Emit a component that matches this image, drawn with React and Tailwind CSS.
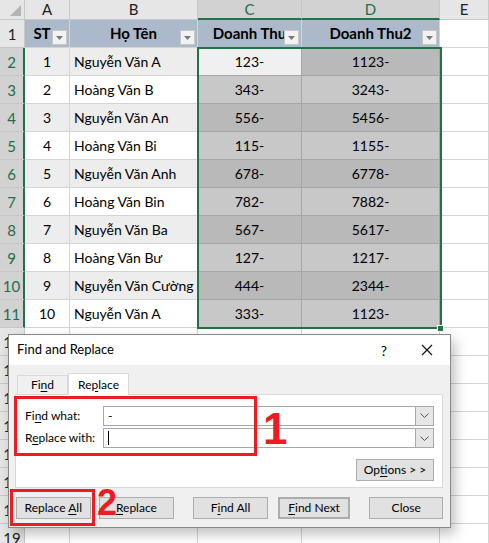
import React from "react";

const rows = [
  [1, "Nguyễn Văn A", "123-", "1123-"],
  [2, "Hoàng Văn B", "343-", "3243-"],
  [3, "Nguyễn Văn An", "556-", "5456-"],
  [4, "Hoàng Văn Bi", "115-", "1155-"],
  [5, "Nguyễn Văn Anh", "678-", "6778-"],
  [6, "Hoàng Văn Bin", "782-", "7882-"],
  [7, "Nguyễn Văn Ba", "567-", "5617-"],
  [8, "Hoàng Văn Bư", "127-", "1217-"],
  [9, "Nguyễn Văn Cường", "444-", "2344-"],
  [10, "Nguyễn Văn A", "333-", "1123-"],
];

const cell = "border-r border-b border-[#d4d4d4] flex items-center whitespace-nowrap overflow-hidden";

function FilterBtn() {
  return (
    <div className="absolute right-[2px] top-[10px] w-[15px] h-[15px] bg-[#f2f2f2] border border-[#c8c8c8] flex items-center justify-center">
      <svg width="7" height="4" viewBox="0 0 7 4">
        <path d="M0 0h7L3.5 4z" fill="#7a7a7a" />
      </svg>
    </div>
  );
}

function U({ children }) {
  return <span className="underline underline-offset-2">{children}</span>;
}

function Btn({ children, className = "" }) {
  return (
    <div
      className={
        "h-[22px] bg-[#e1e1e1] border border-[#adadad] flex items-center justify-center text-[12px] text-black whitespace-pre " +
        className
      }
    >
      <span>{children}</span>
    </div>
  );
}

function Sheet() {
  const colHead = "h-[20px] border-r border-b border-[#c8c8c8] flex items-center justify-center text-[15px]";
  return (
    <div
      className="grid grid-cols-[25px_45px_128px_104px_138px_49px] bg-white"
      style={{ fontFamily: "Lato, 'Liberation Sans', sans-serif" }}
    >
      {/* column header */}
      <div className={colHead + " bg-[#e6e6e6] relative"}>
        <svg className="absolute right-[3px] bottom-[3px]" width="11" height="11" viewBox="0 0 11 11">
          <path d="M11 0v11H0z" fill="#b4b4b4" />
        </svg>
      </div>
      <div className={colHead + " bg-[#e6e6e6] text-[#222]"}>A</div>
      <div className={colHead + " bg-[#e6e6e6] text-[#222]"}>B</div>
      <div className={colHead + " bg-[#d2d2d2] text-[#1f6e4a] border-b-2 border-b-[#217346]"}>C</div>
      <div className={colHead + " bg-[#d2d2d2] text-[#1f6e4a] border-b-2 border-b-[#217346]"}>D</div>
      <div className={colHead + " bg-[#e6e6e6] text-[#222]"}>E</div>

      {/* header row */}
      <div className="h-[28px] border-r border-b border-[#c8c8c8] bg-[#e6e6e6] flex items-end justify-center pb-[2px] text-[15px] text-[#222]">
        1
      </div>
      <div className={cell + " h-[28px] bg-[#acb9ca] font-bold text-[15px] justify-center pr-[10px] relative"}>
        ST
        <FilterBtn />
      </div>
      <div className={cell + " bg-[#acb9ca] font-bold text-[15px] justify-center relative"}>
        Họ Tên
        <FilterBtn />
      </div>
      <div className={cell + " bg-[#acb9ca] font-bold text-[15px] justify-center relative"}>
        Doanh Thu
        <FilterBtn />
      </div>
      <div className={cell + " bg-[#acb9ca] font-bold text-[15px] justify-center relative"}>
        Doanh Thu2
        <FilterBtn />
      </div>
      <div className={cell}></div>

      {rows.map((r, i) => {
        const band = i % 2 === 0;
        const ab = band ? "bg-[#ededed]" : "bg-white";
        const cd = band ? "bg-[#b9b9b9]" : "bg-[#c8c8c8]";
        const sel = "border-r border-b border-[#a6a6a6] flex items-center justify-center text-[14px]";
        return (
          <React.Fragment key={i}>
            <div className="h-[28px] border-b border-[#c8c8c8] border-r-2 border-r-[#217346] bg-[#d2d2d2] flex items-end justify-center pb-[2px] text-[15px] text-[#1f6e4a]">
              {i + 2}
            </div>
            <div className={cell + " " + ab + " justify-center text-[14px] border-[#c8c8c8]"}>{r[0]}</div>
            <div className={cell + " " + ab + " pl-[4px] text-[14px] border-[#c8c8c8]"}>{r[1]}</div>
            <div className={sel + " " + (i === 0 ? "bg-[#f0f0f0]" : cd)}>{r[2]}</div>
            <div className={sel + " " + cd}>{r[3]}</div>
            <div className={cell}></div>
          </React.Fragment>
        );
      })}

      {[12, 13, 14, 15, 16, 17, 18, 19].map((n) => (
        <React.Fragment key={n}>
          <div className="h-[28px] border-r border-b border-[#c8c8c8] bg-[#e6e6e6] flex items-end justify-center pb-[2px] text-[15px] text-[#222]">
            {n}
          </div>
          <div className={cell}></div>
          <div className={cell}></div>
          <div className={cell}></div>
          <div className={cell}></div>
          <div className={cell}></div>
        </React.Fragment>
      ))}
    </div>
  );
}

function Dialog() {
  return (
    <div
      className="absolute left-[8px] top-[334px] w-[443px] h-[194px] bg-[#f0f0f0] border border-[#888] shadow-[4px_6px_12px_rgba(0,0,0,0.25)] flex flex-col text-[12px] text-black"
      style={{ fontFamily: "Lato, 'Liberation Sans', sans-serif" }}
    >
      <div className="h-[30px] bg-white flex items-center pl-[8px] pr-[17px]">
        <span className="text-[13px] flex-1">Find and Replace</span>
        <span className="text-[14px] mr-[34px]">?</span>
        <svg width="12" height="12" viewBox="0 0 12 12">
          <path d="M1 1l10 10M11 1L1 11" stroke="#111" strokeWidth="1.2" />
        </svg>
      </div>

      <div className="pl-[6px] pr-[7px] pt-[7px] flex flex-col">
        <div className="flex items-end h-[22px] pl-[2px]">
          <div className="h-[19px] w-[51px] border border-[#d9d9d9] border-b-0 bg-[#f0f0f0] flex items-center justify-center text-[12px]">
            <span>
              Fi<U>n</U>d
            </span>
          </div>
          <div className="h-[22px] w-[61px] border border-[#d9d9d9] border-b-0 bg-white flex items-center justify-center text-[12px] -mb-px relative z-10">
            <span>
              Re<U>p</U>lace
            </span>
          </div>
        </div>
        <div className="h-[94px] bg-white border border-[#d9d9d9] relative">
          <div
            className="absolute left-[247px] top-[12px] text-[44px] leading-none font-bold text-[#ed1c24]"
            style={{ fontFamily: "'Liberation Sans', sans-serif" }}
          >
            1
          </div>
          <div className="flex flex-col">
            <div className="flex items-center h-[23px] mt-[9px] pl-[9px] pr-[8px]">
              <span className="w-[78px] whitespace-pre">
                Fi<U>n</U>d what:
              </span>
              <div className="flex-1 h-[20px] border border-[#a8a8a8] flex items-center pl-[4px]">-</div>
              <div className="w-[18px] h-[20px] border border-l-0 border-[#a8a8a8] bg-[#e6e6e6] flex items-center justify-center">
                <svg width="9" height="5" viewBox="0 0 9 5">
                  <path d="M0.5 0.5l4 4 4-4" stroke="#555" fill="none" />
                </svg>
              </div>
            </div>
            <div className="flex items-center h-[20px] mt-[1px] pl-[9px] pr-[8px]">
              <span className="w-[78px] whitespace-pre">
                R<U>e</U>place with:
              </span>
              <div className="flex-1 h-[20px] border border-[#a8a8a8] flex items-center pl-[4px]">
                <div className="w-px h-[14px] bg-black"></div>
              </div>
              <div className="w-[18px] h-[20px] border border-l-0 border-[#a8a8a8] bg-[#e6e6e6] flex items-center justify-center">
                <svg width="9" height="5" viewBox="0 0 9 5">
                  <path d="M0.5 0.5l4 4 4-4" stroke="#555" fill="none" />
                </svg>
              </div>
            </div>
            <div className="flex justify-end pr-[8px] mt-[11px]">
              <Btn className="w-[78px]">
                Op<U>t</U>ions &gt; &gt;
              </Btn>
            </div>
          </div>
          <div className="absolute left-[-2px] top-[1px] w-[243px] h-[60px] border-[3px] border-[#ed1c24]"></div>
        </div>

        <div className="flex items-center mt-[9px] pl-[1px] relative">
          <Btn className="w-[75px]">
            Replace <U>A</U>ll
          </Btn>
          <div className="absolute left-[-5px] top-[-8px] w-[85px] h-[37px] border-[3px] border-[#ed1c24]"></div>
          <Btn className="w-[76px] ml-[8px]">
            <U>R</U>eplace
          </Btn>
          <div
            className="absolute left-[82px] top-[-12px] text-[36px] leading-none font-bold text-[#ed1c24] z-10"
            style={{ fontFamily: "'Liberation Sans', sans-serif" }}
          >
            2
          </div>
          <Btn className="w-[75px] ml-[19px]">
            F<U>i</U>nd All
          </Btn>
          <Btn className="w-[73px] ml-[10px] border-2 border-[#0078d7]">
            <U>F</U>ind Next
          </Btn>
          <Btn className="w-[74px] ml-[19px]">Close</Btn>
        </div>
      </div>
    </div>
  );
}

export default function App() {
  return (
    <div className="relative w-[489px] h-[543px] overflow-hidden bg-white">
      <Sheet />
      <div className="absolute left-[197px] top-[47px] w-[245px] h-[282px] border-2 border-[#217346] pointer-events-none"></div>
      <div className="absolute left-[437px] top-[325px] w-[7px] h-[7px] bg-[#217346] border border-white"></div>
      <Dialog />
    </div>
  );
}
